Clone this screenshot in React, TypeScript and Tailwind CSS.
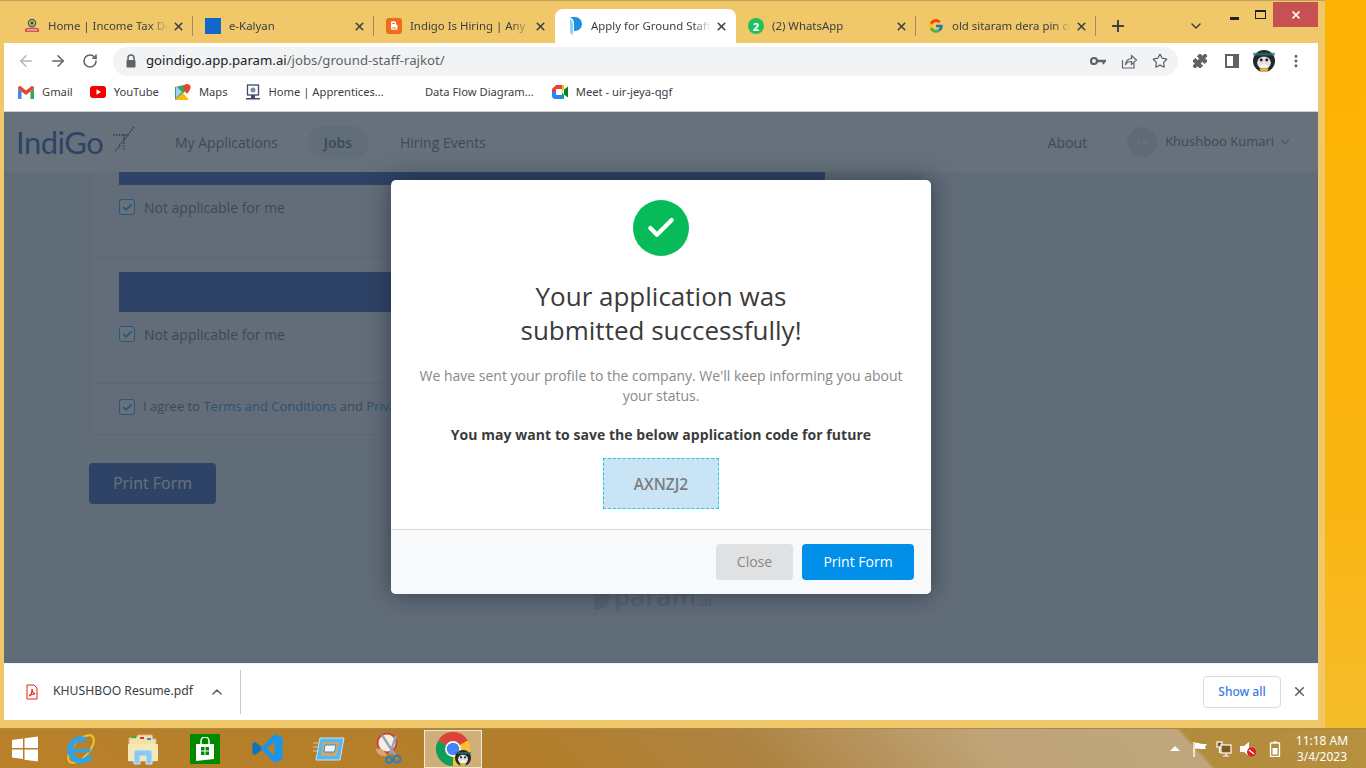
import { ReactNode } from "react";
import { ArrowLeft, ArrowRight, Check, ChevronDown, ChevronUp, MoreVertical, Plus, Puzzle, RotateCw, Star, X } from "lucide-react";
import { FcGoogle } from "react-icons/fc";

const Avatar = ({ size }: { size: number }) => (
  <svg width={size} height={size} viewBox="0 0 24 24">
    <circle cx="12" cy="12" r="12" fill="#20282c" />
    <path d="M0 3h24v3H0z" fill="#1f7a78" opacity="0.7" />
    <ellipse cx="12" cy="14" rx="7.5" ry="7" fill="#e4e1dc" />
    <circle cx="9" cy="11" r="1.6" fill="#222" />
    <circle cx="15" cy="11" r="1.6" fill="#222" />
    <path d="M7 21c2-3 8-3 10 0l-2 3H9z" fill="#d9b04a" />
    <path d="M9 16h6v3H9z" fill="#fff" />
  </svg>
);

const ChromeLogo = () => (
  <svg width="34" height="34" viewBox="0 0 24 24">
    <path d="M1.6 6A12 12 0 0 1 22.4 6L12 12z" fill="#db4437" />
    <path d="M1.6 6A12 12 0 0 0 12 24L12 12z" fill="#0f9d58" />
    <path d="M22.4 6A12 12 0 0 1 12 24L12 12z" fill="#fbc02d" />
    <circle cx="12" cy="12" r="5.6" fill="#fff" />
    <circle cx="12" cy="12" r="4.4" fill="#4285f4" />
  </svg>
);

const TaxIcon = () => (
  <svg width="16" height="16" viewBox="0 0 16 16">
    <circle cx="8" cy="5" r="3.6" fill="#d8c27a" stroke="#2f6b3a" strokeWidth="1.3" />
    <path d="M6.6 3.5h2.8v3H6.6z" fill="#34495e" />
    <path d="M1 11c2-2 12-2 14 0v3H1z" fill="#d4544f" />
    <path d="M3 12h10" stroke="#f4d5c8" strokeWidth="1" />
  </svg>
);

const BloggerIcon = () => (
  <svg width="16" height="16" viewBox="0 0 16 16">
    <rect width="16" height="16" rx="3" fill="#f26a1b" />
    <path d="M5 4.5C5 3.7 5.5 3.3 6.3 3.3h2c1 0 1.7.8 1.7 1.8v1c0 .4.3.6.7.6.4 0 .8.3.8.8v2.700c0 1-.8 1.600-1.700 1.600H6.600c-.9 0-1.600-.7-1.600-1.600z" fill="#fff" />
    <path d="M6.800 5.500h1.600M6.800 10h3" stroke="#f26a1b" strokeWidth="1.100" strokeLinecap="round" />
  </svg>
);

const ParamIcon = () => (
  <svg width="16" height="20" viewBox="0 0 16 20">
    <path d="M3 1h5a7 7 0 0 1 0 14H7V9a8 8 0 0 0-4-8z" fill="#1f8fe6" />
    <path d="M3 3c3 2 3 4 3 6v10c-2-1-3-2-3-4z" fill="#8fd0f7" />
  </svg>
);

const WhatsIcon = () => (
  <span className="flex h-[16px] w-[16px] items-center justify-center rounded-full bg-[#1fc25a] text-[11px] font-bold leading-none text-white">2</span>
);

const GmailIcon = () => (
  <svg width="16" height="13" viewBox="0 0 16 13">
    <path d="M0 2v10c0 .6.4 1 1 1h2.500V5.500z" fill="#4285f4" />
    <path d="M16 2v10c0 .6-.4 1-1 1h-2.500V5.500z" fill="#34a853" />
    <path d="M0 2c0-1.600 1.800-2.400 3-1.500L8 4.500l5-4c1.200-.9 3-.1 3 1.500l-3.500 3.500L8 9 3.500 5.500z" fill="#ea4335" />
  </svg>
);

const YoutubeIcon = () => (
  <svg width="16" height="12" viewBox="0 0 16 12">
    <rect width="16" height="12" rx="3" fill="#f40000" />
    <path d="M6.500 3.300v5.400L11 6z" fill="#fff" />
  </svg>
);

const MapsIcon = () => (
  <svg width="16" height="16" viewBox="0 0 16 16">
    <path d="M0 3l9-2 4 4-13 11z" fill="#34a853" />
    <path d="M0 16l8-7 6 7z" fill="#fbbc04" />
    <path d="M1 2l6 6-6 6z" fill="#aecbfa" />
    <path d="M12 0a3.600 3.600 0 0 0-3.600 3.600C8.400 6 12 10 12 10s3.600-4 3.600-6.400A3.600 3.600 0 0 0 12 0z" fill="#ea4335" />
  </svg>
);

const HomeSiteIcon = () => (
  <svg width="16" height="16" viewBox="0 0 16 16">
    <rect x="2.500" y="1" width="11" height="10" fill="#fff" stroke="#3c4a66" strokeWidth="1.300" />
    <circle cx="8" cy="6" r="2.500" fill="#7d8aa5" />
    <path d="M1 14h14v1.500H1zM6 11h4v3H6z" fill="#3c4a66" />
  </svg>
);

const MeetIcon = () => (
  <svg width="16" height="14" viewBox="0 0 16 14">
    <path d="M0 4l4-4h6v4H4v3H0z" fill="#ea4335" />
    <path d="M0 7h4v3h6v4H3c-1.600 0-3-1.400-3-3z" fill="#2684fc" />
    <path d="M10 0h1c1 0 1 .5 1 1v3l-2 3z" fill="#fbbc04" />
    <path d="M10 7l2 3v3c0 .5-.5 1-1 1h-1z" fill="#00ac47" />
    <path d="M12 4.500L16 1.500v11l-4-3z" fill="#00832d" />
  </svg>
);

const tabs = [
  { title: "Home | Income Tax Department", icon: <TaxIcon />, width: "w-[185px]", pl: "pl-[16px]" },
  { title: "e-Kalyan", icon: <span className="block h-[16px] w-[16px] bg-[#1068c8]" />, width: "w-[181px]", pl: "pl-[12px]" },
  { title: "Indigo Is Hiring | Any Graduate", icon: <BloggerIcon />, width: "w-[181px]", pl: "pl-[12px]" },
  { title: "Apply for Ground Staff - Rajkot", icon: <ParamIcon />, width: "w-[181px]", pl: "pl-[12px]", active: true },
  { title: "(2) WhatsApp", icon: <WhatsIcon />, width: "w-[180px]", pl: "pl-[12px]" },
  { title: "old sitaram dera pin code", icon: <FcGoogle size={16} />, width: "w-[180px]", pl: "pl-[12px]" },
];

const Tab = ({ title, icon, width, pl, active }: { title: string; icon: ReactNode; width: string; pl: string; active?: boolean }) => (
  <div className={`flex h-[34px] shrink-0 items-center pr-[8px] ${width} ${pl} ${active ? "rounded-t-[8px] bg-white" : ""}`}>
    <span className="flex w-[16px] shrink-0 justify-center">{icon}</span>
    <span className="ml-[8px] min-w-0 flex-1 overflow-hidden whitespace-nowrap text-[11.4px] text-[#3c4043] [mask-image:linear-gradient(90deg,#000_85%,transparent)]">{title}</span>
    <X size={13} strokeWidth={3} className="ml-[4px] shrink-0 text-[#3c4043]" />
  </div>
);

const bookmarks = [
  { label: "Gmail", icon: <GmailIcon />, ml: "ml-[14px]" },
  { label: "YouTube", icon: <YoutubeIcon />, ml: "ml-[17px]" },
  { label: "Maps", icon: <MapsIcon />, ml: "ml-[16px]" },
  { label: "Home | Apprentices...", icon: <HomeSiteIcon />, ml: "ml-[17px]" },
  { label: "Data Flow Diagram...", icon: <span className="block w-[16px]" />, ml: "ml-[17px]" },
  { label: "Meet - uir-jeya-qgf", icon: <MeetIcon />, ml: "ml-[18px]" },
];

const CheckBox = () => (
  <span className="flex h-[16px] w-[16px] shrink-0 items-center justify-center rounded-[3px] border border-[#1b94f0] bg-white">
    <Check size={11} strokeWidth={4} className="text-[#1b94f0]" />
  </span>
);

const NotApplicable = () => (
  <div className="flex h-[16px] items-center gap-[9px] text-[14px] text-[#555f6b]">
    <CheckBox />
    <span>Not applicable for me</span>
  </div>
);

function Browser() {
  return (
    <div className="flex h-[728px] w-[1325px] shrink-0 flex-col border-t border-[#bfa35a] bg-[#f0c869] pl-[4px] pr-[7px]">
      {/* tab strip */}
      <div className="relative flex h-[42px] shrink-0 items-end -ml-[4px] pl-[8px]">
        {tabs.map((t, i) => (
          <div key={t.title} className="relative flex items-center">
            <Tab {...t} />
            {i !== 2 && i !== 3 && <span className="h-[20px] w-px bg-[#a38c54] absolute right-0 top-[7px]" />}
          </div>
        ))}
        <div className="flex h-[34px] w-[44px] items-center justify-center text-[#3c4043]">
          <Plus size={18} strokeWidth={2.600} />
        </div>
        <div className="ml-[42px] flex h-[34px] w-[28px] items-center justify-center text-[#3c4043]">
          <ChevronDown size={16} strokeWidth={2.200} />
        </div>
        {/* window controls */}
        <div className="absolute right-0 top-[1px] flex items-start">
          <span className="mr-[16px] mt-[15px] h-[3px] w-[9px] bg-[#222]" />
          <span className="mr-[7px] mt-[8px] h-[9px] w-[11px] border border-t-2 border-[#222]" />
          <span className="flex h-[25px] w-[45px] items-center justify-center bg-[#c75050] text-white">
            <X size={12} strokeWidth={3.500} />
          </span>
        </div>
      </div>

      {/* toolbar */}
      <div className="flex h-[36px] shrink-0 items-center bg-white pl-[13px] pr-[14px]">
        <ArrowLeft size={18} strokeWidth={2} className="text-[#b4b6b9]" />
        <ArrowRight size={18} strokeWidth={2} className="ml-[14px] text-[#5f6368]" />
        <RotateCw size={16} strokeWidth={2.300} className="ml-[15px] text-[#5f6368]" />
        <div className="ml-[15px] flex h-[29px] w-[1065px] items-center rounded-full bg-[#f1f3f4] pl-[12px] pr-[10px]">
          <svg width="12" height="14" viewBox="0 0 12 14" className="shrink-0">
            <path d="M3 6V4a3 3 0 0 1 6 0v2" fill="none" stroke="#5f6368" strokeWidth="1.500" />
            <rect x="1.500" y="6" width="9" height="7.500" rx="1" fill="#5f6368" />
          </svg>
          <span className="ml-[9px] text-[13.2px] text-[#202124]">goindigo.app.param.ai<span className="text-[#5f6368]">/jobs/ground-staff-rajkot/</span></span>
          <div className="ml-auto flex items-center gap-[14px] text-[#5f6368]">
            <svg width="16" height="10" viewBox="0 0 16 10"><circle cx="4" cy="5" r="3" fill="none" stroke="#5f6368" strokeWidth="2.200" /><path d="M7 3.800h9v2.400h-1.500v2h-2v-2H7z" fill="#5f6368" /></svg>
            <svg width="18" height="18" viewBox="0 0 18 18" fill="none" stroke="#5f6368" strokeWidth="1.200"><path d="M2.500 8v8h11.500v-5" /><path d="M5.500 13c0-4 3-6.500 6-6.500V3.500L16.500 8l-5 4.500v-3c-3 0-5 1-6 3.500z" /></svg>
            <Star size={16} strokeWidth={1.800} />
          </div>
        </div>
        <Puzzle size={16} fill="#5f6368" strokeWidth={1.500} className="ml-[14px] text-[#5f6368]" />
        <span className="ml-[17px] h-[14px] w-[14px] border-2 border-r-[6px] border-[#5f6368]" />
        <span className="ml-[14px]"><Avatar size={22} /></span>
        <MoreVertical size={16} strokeWidth={2.600} className="ml-[13px] text-[#5f6368]" />
      </div>

      {/* bookmarks */}
      <div className="flex h-[33px] shrink-0 items-center border-b border-[#d0d0d0] bg-white pb-[5px] text-[11.2px] text-[#3c4043]">
        {bookmarks.map((b) => (
          <div key={b.label} className={`flex items-center ${b.ml}`}>
            <span className="flex w-[16px] shrink-0 justify-center">{b.icon}</span>
            <span className="ml-[8px] whitespace-nowrap">{b.label}</span>
          </div>
        ))}
      </div>

      {/* page */}
      <div className="relative h-[551px] shrink-0 overflow-hidden bg-[#e6e9f2] font-['Open_Sans',sans-serif]">
        <nav className="flex h-[60px] items-center bg-white pl-[12px] pr-[26px] text-[14px] text-[#59636f]">
          <span className="w-[90px] font-['Lato',sans-serif] text-[31px] font-normal leading-none tracking-[-0.5px] text-[#2148a8]">IndiGo</span>
          <svg width="26" height="26" viewBox="0 0 26 26" className="mb-[6px] ml-[4px]" fill="none" stroke="#2148a8" strokeWidth="1.500" strokeDasharray="1.600 1.200">
            <path d="M24 1L9 20M3 9h16M14 8v17M5 25l5-5" />
          </svg>
          <span className="ml-[39px]">My Applications</span>
          <span className="ml-[29px] flex h-[33px] w-[62px] items-center justify-center rounded-full bg-[#ebedf2] font-semibold">Jobs</span>
          <span className="ml-[31px]">Hiring Events</span>
          <span className="ml-auto">About</span>
          <span className="ml-[40px] flex h-[30px] w-[30px] items-center justify-center rounded-full bg-[#dfe2e8] text-[9px] font-bold text-white">KK</span>
          <span className="ml-[8px] text-[13px]">Khushboo Kumari</span>
          <ChevronDown size={14} className="ml-[4px] text-[#8a939e]" />
        </nav>

        <div className="ml-[85px] w-[766px] rounded-b-[4px] border-x border-b border-[#d6dae4] bg-[#eef0f6]">
          <section className="h-[86px] border-b border-[#d6dae4] px-[29px]">
            <div className="h-[13px] w-[706px] bg-[#2148a8]" />
            <div className="mt-[14px]"><NotApplicable /></div>
          </section>
          <section className="h-[126px] border-b border-[#d6dae4] px-[29px] pt-[14px]">
            <div className="h-[40px] w-[706px] bg-[#2148a8]" />
            <div className="mt-[14px]"><NotApplicable /></div>
          </section>
          <section className="flex h-[50px] items-start gap-[8px] px-[29px] pt-[15px] text-[13px] leading-[15px] text-[#555f6b]">
            <CheckBox />
            <span>I agree to <span className="text-[#1b80d0]">Terms and Conditions</span> and <span className="text-[#1b80d0]">Privacy Policy</span></span>
          </section>
        </div>

        <button className="ml-[85px] mt-[28px] flex h-[41px] w-[127px] items-center justify-center rounded-[4px] bg-[#2148a8] pb-[1px] text-[16px] text-white">Print Form</button>

        <div className="mt-[79px] flex items-start justify-center pr-[16px] text-[#c0c4cc]">
          <span className="h-[27px] w-[16px] rounded-r-full bg-[#c3c7d0]" />
          <span className="ml-[4px] text-[26px] font-semibold leading-none">param<span className="text-[14px]">.ai</span></span>
        </div>

        {/* dim layer + dialog */}
        <div className="absolute inset-0 flex justify-center bg-[#33424f]/75 pt-[68px]">
          <div className="h-[414px] w-[540px] overflow-hidden rounded-[5px] bg-white shadow-[0_0_24px_rgba(20,30,40,0.55)]">
            <div className="flex h-[350px] flex-col items-center border-b border-[#d9d9d9] pt-[20px] text-center">
              <span className="flex h-[56px] w-[56px] items-center justify-center rounded-full bg-[#07bc58]">
                <Check size={32} strokeWidth={3.200} className="text-white" />
              </span>
              <h2 className="mt-[23px] text-[26px] font-medium leading-[34px] text-[#3b3b3b]">Your application was<br />submitted successfully!</h2>
              <p className="mt-[19px] w-[500px] text-[14px] leading-[20px] text-[#888888]">We have sent your profile to the company. We'll keep informing you about your status.</p>
              <p className="mt-[19px] text-[14px] font-bold leading-[20px] tracking-[0.05px] text-[#3b3b3b]">You may want to save the below application code for future</p>
              <div className="mt-[13px] flex h-[51px] w-[116px] items-center justify-center border border-dashed border-[#22c7f0] bg-[#c8e4f5] pt-[2px] text-[15.5px] font-semibold text-[#7c7c7c]">AXNZJ2</div>
            </div>
            <div className="flex h-[64px] items-center justify-end gap-[9px] bg-[#f8f9fa] pr-[17px] text-[14px]">
              <button className="h-[36px] w-[77px] rounded-[4px] bg-[#e0e1e3] pb-[2px] text-[#888888]">Close</button>
              <button className="h-[36px] w-[112px] rounded-[4px] bg-[#0090ea] pb-[2px] font-medium text-white">Print Form</button>
            </div>
          </div>
        </div>
      </div>

      {/* download shelf */}
      <div className="flex h-[57px] shrink-0 items-center border-t border-[#f3f3f3] bg-white pb-[1px]">
        <svg width="12" height="16" viewBox="0 0 12 16" className="ml-[22px] shrink-0" fill="none" stroke="#e2231a" strokeWidth="1">
          <path d="M1 1h7l3 3v11H1z" />
          <path d="M3 12c2-1 3-4 3-7 0 3 1 4 3 5-2-.3-4 .5-6 2z" strokeWidth="1.100" />
        </svg>
        <span className="ml-[15px] text-[12.2px] text-[#3c4043]">KHUSHBOO Resume.pdf</span>
        <ChevronUp size={16} strokeWidth={2.400} className="ml-[16px] text-[#5f6368]" />
        <span className="ml-[15px] h-[44px] w-px bg-[#c9c9c9]" />
        <button className="ml-auto h-[32px] w-[78px] rounded-[4px] border border-[#dadce0] text-[12px] font-medium text-[#3b78e7]">Show all</button>
        <X size={15} strokeWidth={2.600} className="ml-[11px] mr-[11px] text-[#5f6368]" />
      </div>
    </div>
  );
}

const TaskIcon = ({ children, className }: { children: ReactNode; className?: string }) => (
  <div className={`flex h-[40px] items-center justify-center ${className ?? "w-[62px]"}`}>{children}</div>
);

function Taskbar() {
  return (
    <div className="flex h-[40px] shrink-0 items-center border-t border-[#a98a4c] bg-[linear-gradient(48deg,#b98029_0%,#b27e2b_40%,#ae8342_55%,#bfa478_72%,#c0a67c_86.4%,#b28b3c_86.8%,#b6913f_100%)] font-['Noto_Sans',sans-serif]">
      <TaskIcon className="w-[50px]">
        <svg width="28" height="28" viewBox="0 0 28 28" fill="#fff">
          <path d="M1 5l11-1.500V13H1zM13.500 3.200L27 1.500V13H13.500zM1 14.500h11V24L1 22.500zM13.500 14.500H27v12l-13.500-1.800z" />
        </svg>
      </TaskIcon>
      <TaskIcon>
        <svg width="32" height="34" viewBox="0 0 32 34">
          <ellipse cx="16" cy="17" rx="17" ry="8" transform="rotate(-48 16 17)" fill="none" stroke="#f2c230" strokeWidth="2" />
          <circle cx="16" cy="18" r="11" fill="none" stroke="#2fa3e6" strokeWidth="5.500" strokeDasharray="50 12" strokeDashoffset="-6" />
          <path d="M7 17h18v3.500H7z" fill="#2fa3e6" />
        </svg>
      </TaskIcon>
      <TaskIcon>
        <svg width="32" height="32" viewBox="0 0 32 32">
          <path d="M2 5h7l2-3h14l1 4h3v22H2z" fill="#f2e2a4" stroke="#cdb98a" />
          <path d="M5 3h4v2H5z" fill="#26b34a" />
          <path d="M13 4h4v2h-4z" fill="#d13b3b" />
          <path d="M20 5h4v2h-4z" fill="#2d8fe0" />
          <path d="M1 11h30v17H1z" fill="#f7e9b5" />
          <path d="M7 31V20c0-2 1-3 3-3h12c2 0 3 1 3 3v11h-6v-8h-6v8z" fill="#8fc8ee" stroke="#cfe8f8" />
        </svg>
      </TaskIcon>
      <TaskIcon>
        <span className="flex h-[30px] w-[30px] items-center justify-center bg-[#008a00]">
          <svg width="20" height="24" viewBox="0 0 20 24">
            <path d="M6 7V4a4 4 0 0 1 8 0v3" fill="none" stroke="#fff" strokeWidth="1.500" />
            <path d="M1 7h18v15l-18 2z" fill="#fff" />
            <path d="M6 10h3.500v3.500H6zM10.500 10H14v3.500h-3.500zM6 14.500h3.500V18H6zM10.500 14.500H14V18h-3.500z" fill="#008a00" />
          </svg>
        </span>
      </TaskIcon>
      <TaskIcon>
        <svg width="33" height="33" viewBox="0 0 24 24">
          <path d="M7.500 10.800L3 7.300 1 8.300v7.400l2 1 4.500-3.500 2-1.200z" fill="#0f73bd" />
          <path d="M17 1.500L7 12l10 10.500 6-2.500V4z" fill="#1d95e6" />
          <path d="M17 7l-5.500 5 5.500 5z" fill="#b98029" />
        </svg>
      </TaskIcon>
      <TaskIcon>
        <svg width="32" height="26" viewBox="0 0 32 26">
          <path d="M7 2h24l-4 22H3z" fill="#58b7ee" stroke="#bfe6fb" />
          <path d="M10 6h16l-2.500 14H8z" fill="#d0a766" />
          <path d="M12 9h11l-1.500 7H11z" fill="#f1f6fb" stroke="#3a90cf" />
          <path d="M0 7h6M0 11h5M0 15h4" stroke="#d8c7a0" />
        </svg>
      </TaskIcon>
      <TaskIcon>
        <svg width="32" height="34" viewBox="0 0 32 34">
          <circle cx="12" cy="11" r="9.500" fill="#f4efe4" stroke="#c8453f" strokeWidth="2" />
          <path d="M1 17c5-2 9 2 11 7-5 1-11-2-11-7z" fill="#d8a67e" />
          <path d="M7 3l13 20M21 4L15 22" stroke="#98a3ad" strokeWidth="2.400" />
          <circle cx="22" cy="27" r="3.500" fill="none" stroke="#2f7fb8" strokeWidth="2.200" />
          <circle cx="14" cy="28" r="3" fill="none" stroke="#2f7fb8" strokeWidth="2.200" />
        </svg>
      </TaskIcon>
      <div className="relative ml-[2px] flex h-[38px] w-[58px] items-center justify-center border border-[#f3e8d2] bg-[#cfae7a]">
        <ChromeLogo />
        <span className="absolute bottom-[1px] left-[30px]"><Avatar size={16} /></span>
      </div>

      {/* tray */}
      <div className="ml-auto flex items-center text-white">
        <span className="h-0 w-0 border-x-[5px] border-b-[5px] border-x-transparent border-b-white" />
        <svg width="16" height="16" viewBox="0 0 16 16" className="ml-[12px]">
          <path d="M2 1v15" stroke="#fff" strokeWidth="1.400" />
          <path d="M3 2c3-1 5 1 8 1h4l-2 3 1 2H9C7 8 5 7 3 8z" fill="#fff" />
        </svg>
        <svg width="16" height="16" viewBox="0 0 16 16" className="ml-[8px]" fill="none" stroke="#fff" strokeWidth="1.200">
          <rect x="1" y="1" width="5" height="5" fill="#7a5a20" />
          <rect x="5" y="4" width="10" height="8" fill="#7a5a20" />
          <path d="M3.500 6v6M10 12v3M7 15h6" />
        </svg>
        <svg width="18" height="16" viewBox="0 0 18 16" className="ml-[7px]">
          <path d="M1 5h4l5-4v14l-5-4H1z" fill="#fff" />
          <circle cx="12.500" cy="11" r="4.500" fill="#e01b24" />
          <path d="M10 9l5 4" stroke="#fff" strokeWidth="1.500" />
        </svg>
        <svg width="12" height="16" viewBox="0 0 12 16" className="ml-[12px]">
          <rect x="1.500" y="2" width="9" height="13.500" fill="none" stroke="#fff" strokeWidth="1.300" />
          <path d="M4 0.500h4V2H4z" fill="#fff" />
          <rect x="3.500" y="7" width="5" height="6.500" fill="#fff" />
        </svg>
        <div className="ml-[9px] w-[66px] pr-[2px] text-center text-[12px] leading-[16px]">
          <div>11:18 AM</div>
          <div>3/4/2023</div>
        </div>
        <span className="w-[10px]" />
      </div>
    </div>
  );
}

export default function App() {
  return (
    <div className="flex h-[768px] w-[1366px] flex-col overflow-hidden font-['Noto_Sans',sans-serif]">
      <div className="flex h-[728px] shrink-0">
        <Browser />
        <div className="flex-1 bg-[linear-gradient(180deg,#fdb302_0%,#fbb512_70%,#f5bc2b_100%)]" />
      </div>
      <Taskbar />
    </div>
  );
}
